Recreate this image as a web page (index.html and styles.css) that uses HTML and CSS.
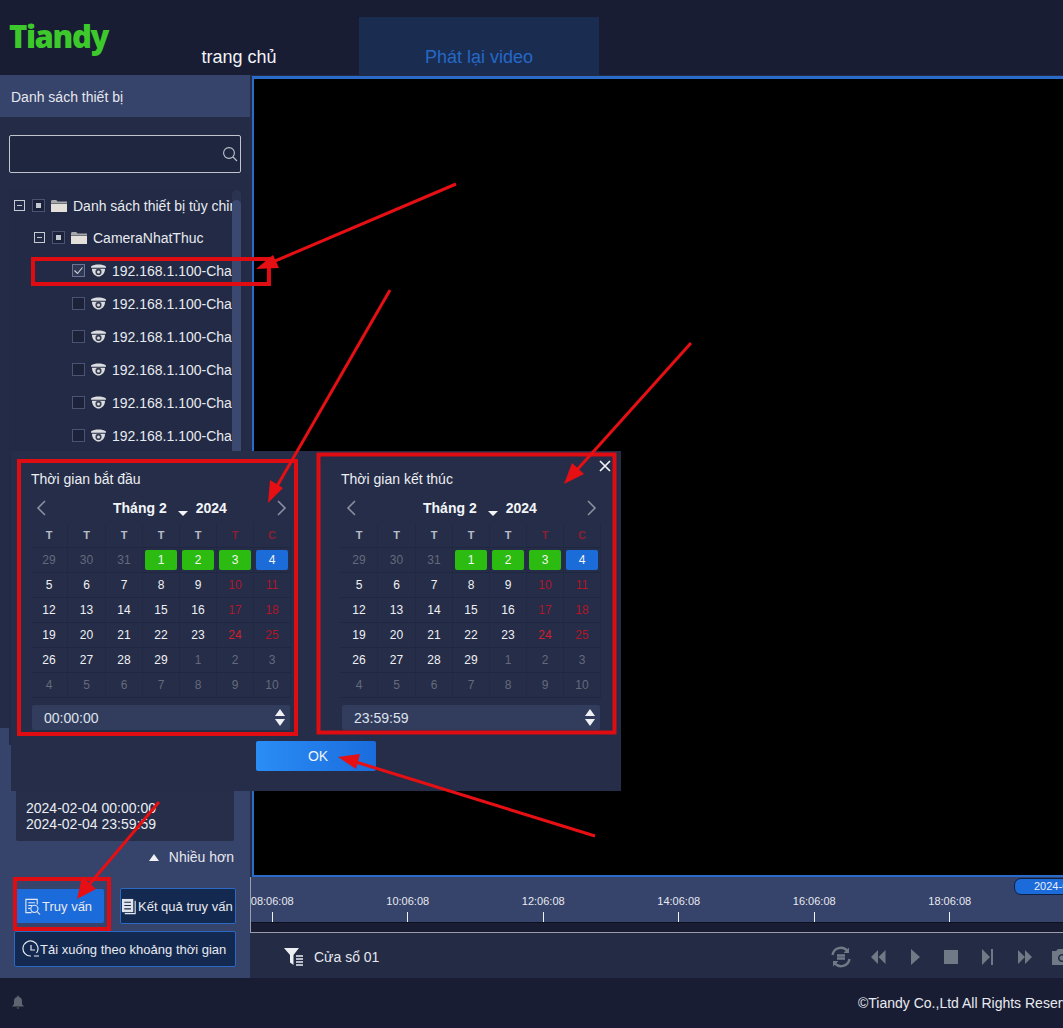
FILE: index.html
```html
<!DOCTYPE html>
<html lang="vi">
<head>
<meta charset="utf-8">
<title>Tiandy</title>
<link rel="stylesheet" href="styles.css">
</head>
<body>
<div class="app">
  <header class="header">
    <div class="logo">Tiandy</div>
    <div class="tab">trang chủ</div>
    <div class="tab tab-active">Phát lại video</div>
  </header>
  <div class="main">
    <aside class="sidebar">
      <div class="side-title">Danh sách thiết bị</div>
      <div class="device-panel">
        <div class="search">
          <svg class="search-icon" viewBox="0 0 16 16"><circle cx="7" cy="7" r="5.4"/><path d="M11 11l4 4"/></svg>
        </div>
        <div class="tree">
          <div class="tree-list">
            <div class="row"><i class="exp"></i><i class="chk part"></i><svg class="folder" viewBox="0 0 16 13"><path d="M0 2.5C0 1.6.6 1 1.4 1h3.8l1.4 1.4H16V4H0z"/><path class="folder-b" d="M0 4.6h16V13H0z"/></svg><span class="label">Danh sách thiết bị tùy chỉnh</span></div>
            <div class="row lvl1"><i class="exp"></i><i class="chk part"></i><svg class="folder" viewBox="0 0 16 13"><path d="M0 2.5C0 1.6.6 1 1.4 1h3.8l1.4 1.4H16V4H0z"/><path class="folder-b" d="M0 4.6h16V13H0z"/></svg><span class="label">CameraNhatThuc</span></div>
            <div class="row lvl2"><i class="chk on"><svg viewBox="0 0 13 13"><path d="M2.5 6.5l3 3 5-6"/></svg></i><svg class="cam" viewBox="0 0 16 13"><path d="M0 2.200C4-.5 12-.5 16 2.200V3.500H0z"/><path d="M1 4.500h14C15 9 12 12.500 8 13 4 12.500 1 9 1 4.500z"/><circle class="lens" cx="8" cy="8" r="3.300"/><circle cx="8" cy="8" r="1.600"/></svg><span class="label">192.168.1.100-Channel1</span></div>
            <div class="row lvl2"><i class="chk"></i><svg class="cam" viewBox="0 0 16 13"><path d="M0 2.200C4-.5 12-.5 16 2.200V3.500H0z"/><path d="M1 4.500h14C15 9 12 12.500 8 13 4 12.500 1 9 1 4.500z"/><circle class="lens" cx="8" cy="8" r="3.300"/><circle cx="8" cy="8" r="1.600"/></svg><span class="label">192.168.1.100-Channel2</span></div>
            <div class="row lvl2"><i class="chk"></i><svg class="cam" viewBox="0 0 16 13"><path d="M0 2.200C4-.5 12-.5 16 2.200V3.500H0z"/><path d="M1 4.500h14C15 9 12 12.500 8 13 4 12.500 1 9 1 4.500z"/><circle class="lens" cx="8" cy="8" r="3.300"/><circle cx="8" cy="8" r="1.600"/></svg><span class="label">192.168.1.100-Channel3</span></div>
            <div class="row lvl2"><i class="chk"></i><svg class="cam" viewBox="0 0 16 13"><path d="M0 2.200C4-.5 12-.5 16 2.200V3.500H0z"/><path d="M1 4.500h14C15 9 12 12.500 8 13 4 12.500 1 9 1 4.500z"/><circle class="lens" cx="8" cy="8" r="3.300"/><circle cx="8" cy="8" r="1.600"/></svg><span class="label">192.168.1.100-Channel4</span></div>
            <div class="row lvl2"><i class="chk"></i><svg class="cam" viewBox="0 0 16 13"><path d="M0 2.200C4-.5 12-.5 16 2.200V3.500H0z"/><path d="M1 4.500h14C15 9 12 12.500 8 13 4 12.500 1 9 1 4.500z"/><circle class="lens" cx="8" cy="8" r="3.300"/><circle cx="8" cy="8" r="1.600"/></svg><span class="label">192.168.1.100-Channel5</span></div>
            <div class="row lvl2"><i class="chk"></i><svg class="cam" viewBox="0 0 16 13"><path d="M0 2.200C4-.5 12-.5 16 2.200V3.500H0z"/><path d="M1 4.500h14C15 9 12 12.500 8 13 4 12.500 1 9 1 4.500z"/><circle class="lens" cx="8" cy="8" r="3.300"/><circle cx="8" cy="8" r="1.600"/></svg><span class="label">192.168.1.100-Channel6</span></div>
          </div>
          <div class="scroll"><div class="thumb"></div></div>
        </div>
      </div>
      <div class="query">
        <div class="range"><div>2024-02-04 00:00:00</div><div>2024-02-04 23:59:59</div></div>
        <div class="more"><i class="tri"></i>Nhiều hơn</div>
        <div class="btn-row">
          <button class="btn btn-primary"><svg viewBox="0 0 18 18"><path d="M14 7V1.500H2v14h6M4.500 5h7M4.500 8h4M4.500 11h2"/><circle cx="11" cy="11.500" r="3.800"/><path d="M14 14.500l3 3"/></svg>Truy vấn</button>
          <button class="btn btn-dark btn-result"><svg viewBox="0 0 18 18"><path class="fill" d="M1 1h12v14H1z"/><path class="cut" d="M3.500 4.500h7M3.500 8h7M3.500 11.500h7"/><path d="M15 3v13.500H4"/></svg>Kết quả truy vấn</button>
        </div>
        <button class="btn btn-dark btn-wide"><svg viewBox="0 0 18 18"><path d="M14.500 13A7.500 7.500 0 1 0 9 16"/><path d="M9 5v5h4M12 16h5"/></svg>Tải xuống theo khoảng thời gian</button>
      </div>
    </aside>
    <section class="content">
      <div class="video"></div>
      <div class="timeline">
        <div class="ruler">
          <div class="mark">08:06:08<i></i></div>
          <div class="mark">10:06:08<i></i></div>
          <div class="mark">12:06:08<i></i></div>
          <div class="mark">14:06:08<i></i></div>
          <div class="mark">16:06:08<i></i></div>
          <div class="mark">18:06:08<i></i></div>
        </div>
        <div class="track"></div>
        <div class="badge">2024-02-04</div>
      </div>
      <div class="controls">
        <svg class="funnel" viewBox="0 0 20 18"><path d="M0 0h15L9.500 7v10L6 14.500V7z"/><path class="lines" d="M12 8h7M12 11h7M12 14h7M12 17h7"/></svg>
        <span class="win">Cửa sổ 01</span>
        <div class="ctl-icons">
          <svg viewBox="0 0 22 22"><path class="ring" d="M2.500 9a8.500 8.500 0 0 1 15-4M19.500 13a8.500 8.500 0 0 1-15 4"/><path d="M19 1.500v5.500h-5.500zM3 20.500V15h5.500z"/><path class="ring" d="M7 9.500h8M7 12.500h8"/></svg>
          <svg viewBox="0 0 22 22"><path d="M11 4v14l-7-7zM18.500 4v14l-7-7z"/></svg>
          <svg viewBox="0 0 22 22"><path d="M7 3l9 8-9 8z"/></svg>
          <svg viewBox="0 0 22 22"><path d="M4 4h14v14H4z"/></svg>
          <svg viewBox="0 0 22 22"><path d="M5 3l8 8-8 8zM14 3h2v16h-2z"/></svg>
          <svg viewBox="0 0 22 22"><path d="M4 4l7 7-7 7zM11 4l7 7-7 7z"/></svg>
          <svg viewBox="0 0 22 22"><path fill-rule="evenodd" d="M1 5h4l2-2h6l2 2h5v14H1zM11 8a4 4 0 1 0 .01 0zM11 9.500a2.500 2.500 0 1 1-.01 0z"/></svg>
        </div>
      </div>
    </section>
  </div>
  <footer class="footer">
    <svg class="bell" viewBox="0 0 12 14"><path d="M6 0l1 2c2 .5 3 2 3 4v3l2 2.500H0L2 9V6c0-2 1-3.500 3-4zM4.500 12.500h3L6 14z"/></svg>
    <span class="copy">©Tiandy Co.,Ltd All Rights Reserved</span>
  </footer>
</div>

<div class="popup">
  <svg class="close" viewBox="0 0 12 12"><path d="M1 1l10 10M11 1L1 11"/></svg>
  <div class="cals">
    <div class="cal">
      <div class="cal-title">Thời gian bắt đầu</div>
      <div class="month">
        <svg class="chev" viewBox="0 0 10 16"><path d="M9 1L2 8l7 7"/></svg>
        <div class="month-mid"><b>Tháng 2</b><i class="caret"></i><b>2024</b></div>
        <svg class="chev chev-r" viewBox="0 0 10 16"><path d="M1 1l7 7-7 7"/></svg>
      </div>
      <div class="grid">
        <div class="head">T</div><div class="head">T</div><div class="head">T</div><div class="head">T</div><div class="head">T</div><div class="head red-h">T</div><div class="head red-h">C</div>
        <div class="m">29</div><div class="m">30</div><div class="m">31</div><div><span class="chip green">1</span></div><div><span class="chip green">2</span></div><div><span class="chip green">3</span></div><div><span class="chip blue">4</span></div>
        <div>5</div><div>6</div><div>7</div><div>8</div><div>9</div><div class="r">10</div><div class="r">11</div>
        <div>12</div><div>13</div><div>14</div><div>15</div><div>16</div><div class="r">17</div><div class="r">18</div>
        <div>19</div><div>20</div><div>21</div><div>22</div><div>23</div><div class="r hot">24</div><div class="r">25</div>
        <div>26</div><div>27</div><div>28</div><div>29</div><div class="m">1</div><div class="m">2</div><div class="m">3</div>
        <div class="m">4</div><div class="m">5</div><div class="m">6</div><div class="m">7</div><div class="m">8</div><div class="m">9</div><div class="m">10</div>
      </div>
      <div class="time"><span>00:00:00</span><div class="spin"><i class="up"></i><i class="down"></i></div></div>
    </div>
    <div class="cal">
      <div class="cal-title">Thời gian kết thúc</div>
      <div class="month">
        <svg class="chev" viewBox="0 0 10 16"><path d="M9 1L2 8l7 7"/></svg>
        <div class="month-mid"><b>Tháng 2</b><i class="caret"></i><b>2024</b></div>
        <svg class="chev chev-r" viewBox="0 0 10 16"><path d="M1 1l7 7-7 7"/></svg>
      </div>
      <div class="grid">
        <div class="head">T</div><div class="head">T</div><div class="head">T</div><div class="head">T</div><div class="head">T</div><div class="head red-h">T</div><div class="head red-h">C</div>
        <div class="m">29</div><div class="m">30</div><div class="m">31</div><div><span class="chip green">1</span></div><div><span class="chip green">2</span></div><div><span class="chip green">3</span></div><div><span class="chip blue">4</span></div>
        <div>5</div><div>6</div><div>7</div><div>8</div><div>9</div><div class="r">10</div><div class="r">11</div>
        <div>12</div><div>13</div><div>14</div><div>15</div><div>16</div><div class="r">17</div><div class="r">18</div>
        <div>19</div><div>20</div><div>21</div><div>22</div><div>23</div><div class="r hot">24</div><div class="r">25</div>
        <div>26</div><div>27</div><div>28</div><div>29</div><div class="m">1</div><div class="m">2</div><div class="m">3</div>
        <div class="m">4</div><div class="m">5</div><div class="m">6</div><div class="m">7</div><div class="m">8</div><div class="m">9</div><div class="m">10</div>
      </div>
      <div class="time"><span>23:59:59</span><div class="spin"><i class="up"></i><i class="down"></i></div></div>
    </div>
  </div>
  <button class="ok">OK</button>
</div>

<svg class="marks" viewBox="0 0 1063 1028">
  <g class="boxes">
    <rect x="33" y="259" width="236" height="25"/>
    <rect x="19" y="461" width="277" height="273"/>
    <rect x="318.500" y="454.500" width="296" height="278"/>
    <rect x="15" y="879" width="94" height="50"/>
  </g>
  <g class="lines">
    <path d="M456 184L268 264"/>
    <path d="M390 290L276 488"/>
    <path d="M691 343L576 471"/>
    <path d="M595 836L356 762"/>
    <path d="M159 802L88 886"/>
  </g>
  <g class="heads">
    <path d="M256 269L273 255L279 268Z"/>
    <path d="M268 503L270 480L283 488Z"/>
    <path d="M564 484L572 463L584 474Z"/>
    <path d="M338 757L360 754L356 769Z"/>
    <path d="M77 899L82 877L96 889Z"/>
  </g>
</svg>
</body>
</html>
```
FILE: styles.css
```css
* { box-sizing: border-box; }
html, body { margin: 0; height: 100%; overflow: hidden; }
body {
  position: relative;
  width: 1063px;
  height: 1028px;
  font-family: "Liberation Sans", Arial, sans-serif;
  font-size: 14px;
  color: #e8eaf0;
  background: #181d33;
}
.app { display: flex; flex-direction: column; height: 1028px; }

/* header */
.header { display: flex; align-items: flex-end; height: 75px; flex: none; background: #181d33; }
.logo {
  align-self: flex-start;
  width: 119px;
  padding: 16px 0 0 9px;
  font-family: "Open Sans", sans-serif;
  font-weight: 800;
  font-size: 31px;
  line-height: 40px;
  letter-spacing: -1.400px;
  color: #3dc92c;
}
.tab { width: 240px; height: 58px; padding-top: 30px; text-align: center; font-size: 18px; line-height: 20px; color: #f2f3f6; }
.tab-active { background: #1a2d50; color: #2568c8; }

/* layout */
.main { display: flex; flex: none; height: 903px; }
.sidebar { display: flex; flex-direction: column; width: 250px; flex: none; background: #36436a; overflow: hidden; }
.side-title {
  flex: none;
  height: 40px;
  margin-top: 2px;
  padding-left: 11px;
  font-size: 14px;
  line-height: 40px;
  background: #36436a;
  color: #e6e8ee;
}
.device-panel { flex: none; height: 611px; padding: 18px 9px 0; background: #232b46; }
.search { position: relative; display: flex; justify-content: flex-end; align-items: center; height: 38px; width: 232px; padding-right: 2px; border: 1px solid #bfc4ce; border-radius: 2px; background: #1f2740; }
.search-icon { width: 16px; height: 16px; fill: none; stroke: #bfc4ce; stroke-width: 1.100; }
.tree { display: flex; width: 234px; height: 555px; margin-top: 17px; background: #222a45; }
.tree-list { flex: 1; min-width: 0; overflow: hidden; }
.row { display: flex; align-items: center; height: 33px; padding-left: 5px; white-space: nowrap; }
.row:first-child { height: 31px; }
.lvl1 { padding-left: 25px; }
.lvl2 { padding-left: 63px; }
.exp { position: relative; width: 11px; height: 11px; flex: none; border: 1px solid #c6cad3; margin-right: 7px; }
.exp::after { content: ""; position: absolute; left: 2px; right: 2px; top: 4px; height: 1px; background: #c6cad3; }
.chk { position: relative; display: block; width: 13px; height: 13px; flex: none; border: 1px solid #4a5472; background: #1c2239; margin-right: 6px; }
.chk.part::after { content: ""; position: absolute; left: 3px; top: 3px; width: 5px; height: 5px; background: #c4c8d2; }
.chk.on { background: #2e3854; border-color: #6b7490; }
.chk svg { position: absolute; left: -1px; top: -1px; width: 13px; height: 13px; fill: none; stroke: #cfd3dc; stroke-width: 1.100; }
.folder { width: 16px; height: 13px; flex: none; fill: #a7a8a8; margin-right: 6px; }
.folder-b { fill: #e2e0d8; }
.cam { width: 15px; height: 13px; flex: none; fill: #dcdde0; margin-right: 6px; }
.cam .lens { fill: #3a3f52; }
.label { font-size: 14px; color: #e8eaf0; }
.scroll { position: relative; width: 9px; flex: none; margin-right: 2px; border-radius: 5px; background: #2a3350; }
.thumb { width: 9px; height: 100%; margin-top: 10px; border-radius: 5px; background: #3b4870; }

/* query */
.query { flex: 1; padding: 12px 14px 0; }
.range { display: flex; flex-direction: column; justify-content: flex-end; width: 218px; height: 101px; margin-left: 2px; padding: 0 10px 9px; border-radius: 2px; font-size: 14px; line-height: 16px; background: #262e4a; color: #eceef3; }
.more { display: flex; align-items: center; justify-content: flex-end; width: 220px; height: 32px; font-size: 14px; color: #e6e8ee; }
.tri { width: 0; height: 0; margin-right: 10px; border: 5px solid transparent; border-top: 0; border-bottom: 7px solid #f0f1f4; }
.btn-row { display: flex; align-items: center; gap: 16px; height: 36px; margin-top: 15px; }
.btn { display: flex; align-items: center; font-family: inherit; font-size: 13px; color: #e8eaf0; border-radius: 2px; padding: 0; white-space: nowrap; }
.btn svg { flex: none; width: 17px; height: 17px; fill: none; stroke: #e4e7ee; stroke-width: 1.200; margin-right: 1px; }
.btn-primary { width: 89px; height: 34px; margin-left: 1px; padding-left: 9px; border: 0; background: #1c6bda; }
.btn-dark { border: 1px solid #2b69c2; background: #14294f; }
.btn-result { width: 116px; height: 36px; padding-left: 0; }
.btn-result svg { margin-right: 0; }
.btn-result .fill { fill: #e0e3ea; stroke: none; }
.btn-result .cut { stroke: #14294f; }
.btn-wide { width: 222px; height: 36px; margin-top: 7px; padding-left: 7px; }
.btn-wide svg { width: 18px; height: 18px; margin-right: 0; }

/* content */
.content { display: flex; flex-direction: column; flex: 1; min-width: 0; background: #232b45; overflow: hidden; }
.video { flex: none; height: 801px; margin: 1px 0 0 2px; border-top: 3px solid #2a6ac8; border-left: 2px solid #2a6ac8; border-bottom: 2px solid #2a6ac8; background: #000; }
.timeline { position: relative; flex: none; display: flex; flex-direction: column; height: 56px; border-left: 1px solid #9a9eaa; border-bottom: 1px solid #9a9eaa; background: #36436a; overflow: hidden; }
.ruler { display: flex; flex: none; height: 45px; padding-top: 18px; margin-left: -46.500px; }
.mark { display: flex; flex-direction: column; align-items: center; flex: none; width: 135.500px; font-size: 11px; line-height: 13px; color: #e8eaf0; }
.mark i { display: block; width: 1px; height: 10px; margin-top: 4px; background: #f0f1f4; }
.track { flex: 1; border-top: 1px solid #0c0f1c; background: #181d33; }
.badge { position: absolute; left: 763px; top: 1px; width: 80px; height: 17px; padding-left: 19px; border: 1px solid #0f2040; border-radius: 7px; font-size: 11px; line-height: 15px; background: #1c6bda; color: #e8eefa; white-space: nowrap; }
.controls { display: flex; align-items: center; flex: 1; padding: 3px 0 0 34px; }
.funnel { width: 20px; height: 18px; flex: none; fill: #eceef2; margin-right: 10px; }
.funnel .lines { fill: none; stroke: #eceef2; stroke-width: 1.500; }
.win { flex: none; font-size: 14px; color: #e6e8ee; }
.ctl-icons { display: flex; flex: none; gap: 14.700px; margin-left: 451px; }
.ctl-icons svg { width: 22px; height: 22px; flex: none; fill: #6f7a86; }
.ctl-icons .ring { fill: none; stroke: #6f7a86; stroke-width: 2.400; }

/* footer */
.footer { display: flex; align-items: center; flex: 1; white-space: nowrap; background: #181d33; }
.bell { width: 12px; height: 14px; flex: none; margin: -2px 0 0 12px; fill: #5e6470; }
.copy { margin-left: 834px; font-size: 14px; color: #e8eaf0; }

/* date popup */
.popup { position: absolute; left: 11px; top: 451px; width: 610px; height: 340px; padding: 20px 20px 0 20px; background: #252d48; }
.close { position: absolute; right: 10px; top: 9px; width: 12px; height: 12px; fill: none; stroke: #f2f3f6; stroke-width: 1.700; }
.cals { display: flex; gap: 50px; }
.cal { width: 260px; flex: none; }
.cal-title { font-size: 14px; line-height: 16px; color: #eceef3; }
.month { display: flex; align-items: center; height: 24px; margin-top: 9px; font-size: 14px; color: #f4f5f8; }
.chev { width: 10px; height: 16px; flex: none; margin-left: 5px; fill: none; stroke: #8a90a0; stroke-width: 1.600; }
.chev-r { margin-left: auto; margin-right: 4px; }
.month-mid { display: flex; align-items: center; margin-left: 67px; }
.caret { width: 0; height: 0; margin: 11px 8px 0 11px; border: 5px solid transparent; border-bottom: 0; border-top: 5px solid #f4f5f8; }
.grid { display: grid; grid-template-columns: 37px 38px repeat(5, 37px); grid-auto-rows: 25px; margin-top: 3px; }
.grid > div { display: flex; align-items: center; justify-content: center; border-right: 1px solid #222a43; border-bottom: 1px solid #1f2740; font-size: 12px; color: #f0f1f4; }
.grid > div.head { font-size: 11px; font-weight: 700; color: #b9bdc8; }
.grid > div.red-h { color: #8b2134; }
.grid > div.m { color: #646a7b; }
.grid > div.r { color: #b0172a; }
.grid > div.hot { color: #d0202e; }
.chip { display: flex; align-items: center; justify-content: center; width: 32px; height: 20px; border-radius: 2px; color: #f4f6f4; }
.green { background: #2cbb10; }
.blue { background: #1b6bd8; }
.time { display: flex; align-items: center; justify-content: space-between; width: 258px; height: 25px; margin: 7px 0 0 1px; padding: 0 5px 0 12px; border-radius: 2px; font-size: 14px; background: #323d5e; color: #dfe2ea; }
.spin { display: flex; flex-direction: column; gap: 3px; }
.spin i { display: block; width: 0; height: 0; border: 5px solid transparent; }
.spin .up { border-top: 0; border-bottom: 7px solid #f0f1f4; }
.spin .down { border-bottom: 0; border-top: 7px solid #f0f1f4; }
.ok { display: block; width: 120px; height: 30px; margin: 11px 0 0 225px; padding: 0 0 0 4px; border: 0; border-radius: 2px; font-family: inherit; font-size: 14px; color: #f0f3f8; background: linear-gradient(90deg, #2a8df6, #1a6cdc); }

/* annotations */
.marks { position: absolute; left: 0; top: 0; width: 1063px; height: 1028px; pointer-events: none; }
.boxes rect { fill: none; stroke: #df0d12; stroke-width: 4; }
.marks .lines path { fill: none; stroke: #e60f14; stroke-width: 3; }
.heads path { fill: #e60f14; }
```
